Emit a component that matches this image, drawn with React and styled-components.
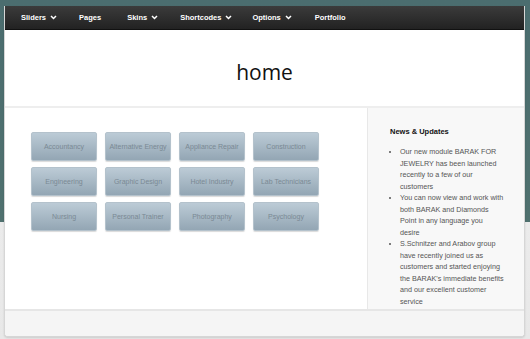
import React from 'react'
import styled, { createGlobalStyle } from 'styled-components'

const GlobalStyle = createGlobalStyle`
  html, body {
    margin: 0;
    padding: 0;
  }
  body {
    height: 339px;
    overflow: hidden;
    background: linear-gradient(to bottom, #4b6d6f 0, #50716f 222px, #ebebeb 222px, #e8e8e8 100%);
    font-family: "Liberation Sans", Arial, sans-serif;
  }
`

const Frame = styled.div`
  margin: 6px 5px 0 4px;
  background: #fff;
  border: 1px solid #d6d6d6;
  border-top: none;
  border-radius: 0 0 4px 4px;
  box-shadow: 0 1px 2px rgba(0, 0, 0, 0.12);
  overflow: hidden;
`

const NavBar = styled.nav`
  display: flex;
  align-items: center;
  height: 23px;
  padding-left: 16px;
  background: linear-gradient(to bottom, #3b3b3b, #222);
  border-bottom: 1px solid #111;
`

const NavItem = styled.a`
  display: flex;
  align-items: center;
  gap: 4px;
  margin-right: ${p => p.$gap || 25}px;
  color: #fff;
  font-family: "Liberation Sans", Arial, sans-serif;
  font-weight: bold;
  font-size: 7.5px;
  text-decoration: none;
`

const Chevron = () => (
  <svg width="7" height="5" viewBox="0 0 7 5">
    <path d="M1 1 L3.5 3.5 L6 1" fill="none" stroke="#fff" strokeWidth="1.5" />
  </svg>
)

const Header = styled.header`
  display: flex;
  align-items: center;
  justify-content: center;
  height: 76px;
  border-bottom: 2px solid #eeeeee;
`

const Title = styled.h1`
  margin: 0;
  padding-top: 8px;
  font-family: "Open Sans", sans-serif;
  font-weight: normal;
  font-size: 21px;
  color: #111;
`

const Body = styled.div`
  display: flex;
  height: 201px;
`

const Main = styled.main`
  flex: 1;
  padding: 24px 0 0 26px;
`

const Grid = styled.div`
  display: grid;
  grid-template-columns: repeat(4, 66px);
  grid-auto-rows: 29px;
  column-gap: 8px;
  row-gap: 6px;
`

const Tile = styled.a`
  display: flex;
  align-items: center;
  justify-content: center;
  border-radius: 2px;
  border: 1px solid #b4c2cc;
  background: linear-gradient(to bottom, #bccbd6, #93a6b4);
  box-shadow: 0 1px 1px rgba(0, 0, 0, 0.15);
  color: #7a8994;
  font-size: 7px;
  text-decoration: none;
`

const Sidebar = styled.aside`
  width: 157px;
  box-sizing: border-box;
  padding: 19px 20px 0 22px;
  background: #f8f8f8;
  border-left: 1px solid #e8e8e8;
`

const SideTitle = styled.h3`
  margin: 0 0 10px;
  font-size: 7.5px;
  font-weight: bold;
  color: #111;
`

const NewsList = styled.ul`
  margin: 0;
  padding-left: 10px;
  color: #555;
  font-size: 7.2px;
  line-height: 11.5px;

  li::marker {
    font-size: 7px;
  }
`

const Footer = styled.footer`
  height: 25px;
  background: #f5f5f5;
  border-top: 2px solid #e6e6e6;
`

const menu = [
  { label: 'Sliders', drop: true, gap: 22 },
  { label: 'Pages', gap: 26 },
  { label: 'Skins', drop: true, gap: 22 },
  { label: 'Shortcodes', drop: true, gap: 20 },
  { label: 'Options', drop: true, gap: 23 },
  { label: 'Portfolio' },
]

const tiles = [
  'Accountancy', 'Alternative Energy', 'Appliance Repair', 'Construction',
  'Engineering', 'Graphic Design', 'Hotel Industry', 'Lab Technicians',
  'Nursing', 'Personal Trainer', 'Photography', 'Psychology',
]

const news = [
  'Our new module BARAK FOR JEWELRY has been launched recently to a few of our customers',
  'You can now view and work with both BARAK and Diamonds Point in any language you desire',
  "S.Schnitzer and Arabov group have recently joined us as customers and started enjoying the BARAK's immediate benefits and our excellent customer service",
]

export default function App() {
  return (
    <>
      <GlobalStyle />
      <Frame>
        <NavBar>
          {menu.map(m => (
            <NavItem key={m.label} $gap={m.gap} href="#">
              {m.label}
              {m.drop && <Chevron />}
            </NavItem>
          ))}
        </NavBar>
        <Header>
          <Title>home</Title>
        </Header>
        <Body>
          <Main>
            <Grid>
              {tiles.map(t => <Tile key={t} href="#">{t}</Tile>)}
            </Grid>
          </Main>
          <Sidebar>
            <SideTitle>News &amp; Updates</SideTitle>
            <NewsList>
              {news.map(n => <li key={n}>{n}</li>)}
            </NewsList>
          </Sidebar>
        </Body>
        <Footer />
      </Frame>
    </>
  )
}
